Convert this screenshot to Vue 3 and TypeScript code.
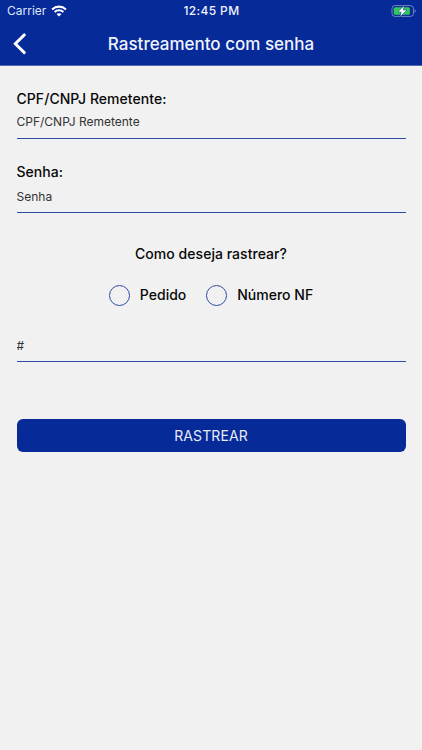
<script setup lang="ts">
import { ref } from 'vue'

interface Option {
  id: string
  label: string
}

const options: Option[] = [
  { id: 'pedido', label: 'Pedido' },
  { id: 'nf', label: 'Número NF' },
]
const documentId = ref('')
const password = ref('')
const code = ref('')
const selected = ref('')
</script>

<template>
  <div class="screen">
    <header class="header">
      <div class="status">
        <div class="carrier">
          <span class="carrier-name">Carrier</span>
          <svg class="wifi" viewBox="0 0 16 12" width="16" height="12">
            <path d="M1.1 4.4C5 .7 11 .7 14.900 4.400" fill="none" stroke="#fff" stroke-width="2.1" />
            <path d="M3.600 7C6.100 4.700 9.900 4.700 12.400 7" fill="none" stroke="#fff" stroke-width="2" />
            <path d="M8 11.600L5.500 9.100C6.900 7.800 9.100 7.800 10.500 9.100Z" fill="#fff" />
          </svg>
        </div>
        <span class="time">12:45 PM</span>
        <div class="power">
          <svg viewBox="0 0 26 12" width="26" height="12">
            <rect x="2" y=".6" width="21.500" height="10.800" rx="3" fill="none" stroke="#7386c2" stroke-width="1" />
            <rect x="3.700" y="2.200" width="16.200" height="7.600" rx="1.600" fill="#34c759" />
            <path d="M24.600 4.200C26.100 4.800 26.100 7.200 24.600 7.800Z" fill="#7386c2" />
            <path d="M14 .9L8.200 6.700H11.600L10.400 11.200L16.600 5.300H13Z" fill="#fff" stroke="#062a98" stroke-width="1" paint-order="stroke" />
          </svg>
        </div>
      </div>
      <div class="nav">
        <button class="back" type="button" aria-label="Voltar">
          <svg viewBox="0 0 14 22" width="14" height="22">
            <path d="M11.300 1.900L2.300 10.700L11.300 19.600" fill="none" stroke="#fff" stroke-width="2.900" stroke-linecap="round" />
          </svg>
        </button>
        <h1 class="title">Rastreamento com senha</h1>
      </div>
    </header>

    <main class="form">
      <label class="field">
        <span class="label">CPF/CNPJ Remetente:</span>
        <input v-model="documentId" class="input" type="text" placeholder="CPF/CNPJ Remetente" />
      </label>
      <label class="field second">
        <span class="label">Senha:</span>
        <input v-model="password" class="input low" type="password" placeholder="Senha" />
      </label>
      <p class="question">Como deseja rastrear?</p>
      <div class="options">
        <label v-for="option in options" :key="option.id" class="option">
          <input v-model="selected" class="radio" type="radio" name="mode" :value="option.id" />
          <span class="option-name">{{ option.label }}</span>
        </label>
      </div>
      <input v-model="code" class="input low code" type="text" placeholder="#" />
      <button class="submit" type="button"><span>RASTREAR</span></button>
    </main>
  </div>
</template>

<style>
body {
  margin: 0;
  background: #f1f1f1;
}
</style>

<style scoped>
.screen {
  width: 100%;
  height: 750px;
  overflow: hidden;
  background: #f1f1f1;
  color: #080808;
  font-family: Inter, sans-serif;
}
.header {
  box-sizing: border-box;
  height: 66px;
  background: #062a98;
  border-bottom: 1px solid #5368b0;
  color: #fff;
}
.status {
  display: grid;
  grid-template-columns: 1fr auto 1fr;
  height: 22px;
  padding: 0 6px 0 7px;
  align-items: center;
}
.carrier {
  display: flex;
  align-items: center;
  gap: 5px;
}
.carrier-name {
  font-size: 12px;
  line-height: 22px;
  color: #dfe5f7;
}
.time {
  font-size: 12px;
  line-height: 22px;
  font-weight: 500;
  letter-spacing: 0.35px;
  color: #f0f3fc;
}
.power {
  display: flex;
  justify-content: flex-end;
}
.nav {
  display: grid;
  grid-template-columns: 40px 1fr 40px;
  height: 43px;
  align-items: center;
}
.back {
  display: flex;
  padding: 0 0 0 13px;
  border: 0;
  background: none;
}
.title {
  margin: 0;
  text-align: center;
  font-size: 17px;
  line-height: 24px;
  font-weight: 500;
  white-space: nowrap;
  color: #f0f3fc;
}
.form {
  display: flex;
  flex-direction: column;
  padding: 23px 16.500px 0;
}
.field {
  display: flex;
  flex-direction: column;
}
.second {
  margin-top: 23px;
}
.label {
  font-size: 14px;
  line-height: 20px;
  font-weight: 500;
  letter-spacing: 0.05px;
}
.input {
  box-sizing: border-box;
  width: 100%;
  height: 30px;
  margin: 0;
  padding: 0 0 4px;
  border: 0;
  border-bottom: 1px solid #2e4aa5;
  outline: 0;
  background: none;
  font: 400 12px Inter, sans-serif;
  color: #222;
}
.low {
  height: 31px;
  padding-bottom: 2px;
}
.input::placeholder {
  color: #333;
  opacity: 1;
}
.question {
  margin: 31px 0 0;
  text-align: center;
  font-size: 14px;
  line-height: 20px;
  font-weight: 500;
  letter-spacing: 0.04px;
}
.options {
  display: flex;
  justify-content: center;
  gap: 20px;
  margin-top: 21px;
}
.option {
  display: flex;
  align-items: center;
  gap: 10px;
}
.radio {
  appearance: none;
  box-sizing: border-box;
  width: 21px;
  height: 21px;
  margin: 0;
  border: 1px solid #2e4aa5;
  border-radius: 50%;
}
.radio:checked {
  background: radial-gradient(#062a98 45%, transparent 50%);
}
.option-name {
  margin-bottom: 1px;
  font-size: 14px;
  line-height: 20px;
  font-weight: 500;
}
.code {
  margin-top: 25px;
}
.submit {
  height: 33.500px;
  margin-top: 56.800px;
  padding: 0 0 1px;
  border: 0;
  border-radius: 6px;
  background: #062a98;
  font: 400 14px Inter, sans-serif;
  letter-spacing: 0.1px;
  color: #e6ebfa;
}
</style>
